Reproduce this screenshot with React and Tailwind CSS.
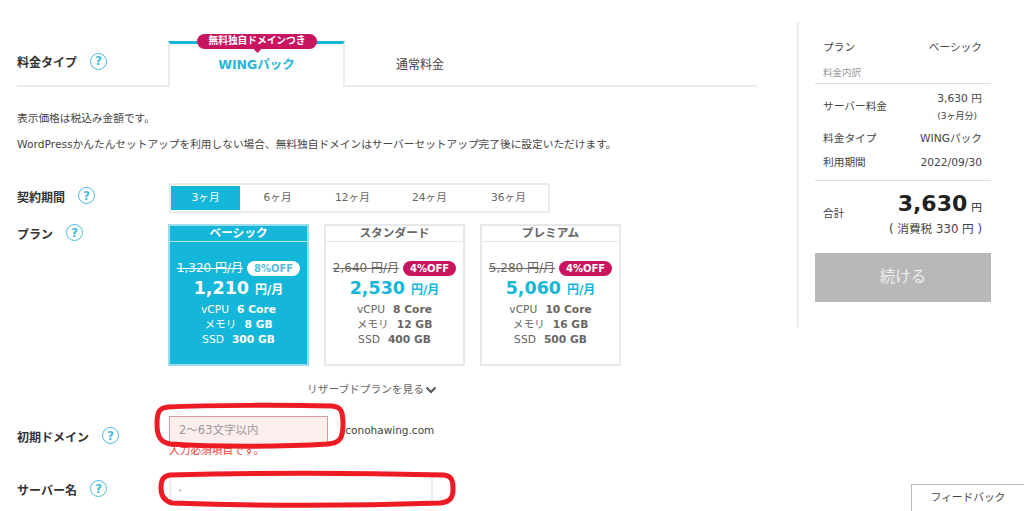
const font = { fontFamily: '"DejaVu Sans", "Noto Sans CJK JP", sans-serif' };

const Help = () => (
  <span className="mb-[4px] flex h-[17px] w-[17px] shrink-0 items-center justify-center rounded-full border-[1.5px] border-[#45bcdd] text-[12px] font-semibold leading-none text-[#45bcdd]">?</span>
);

const Label = ({ children }) => (
  <div className="flex items-center gap-[13px] text-[12px] font-bold text-[#333]">
    <span>{children}</span>
    <Help />
  </div>
);

const terms = [
  { label: "3ヶ月", width: "w-[69px]", active: true },
  { label: "6ヶ月", width: "w-[75px]" },
  { label: "12ヶ月", width: "w-[75px]" },
  { label: "24ヶ月", width: "w-[79px]" },
  { label: "36ヶ月", width: "w-[79px]" },
];

const plans = [
  { name: "ベーシック", old: "1,320 円/月", off: "8%OFF", price: "1,210", cpu: "6 Core", mem: "8 GB", ssd: "300 GB", active: true },
  { name: "スタンダード", old: "2,640 円/月", off: "4%OFF", price: "2,530", cpu: "8 Core", mem: "12 GB", ssd: "400 GB" },
  { name: "プレミアム", old: "5,280 円/月", off: "4%OFF", price: "5,060", cpu: "10 Core", mem: "16 GB", ssd: "500 GB" },
];

const PlanCard = ({ plan }) => (
  <div className={`flex h-[142px] w-[141px] flex-col border-2 text-center ${plan.active ? "border-[#9adcec] bg-[#14b7d9] text-white" : "border-[#e8e8e8] bg-white text-[#666]"}`}>
    <div className={`mx-[-1px] h-[16px] border-b text-[11.7px] font-bold leading-[15px] ${plan.active ? "border-[#b5e6f2]" : "border-[#e8e8e8]"}`}>{plan.name}</div>
    <div className="mt-[19px] flex items-center justify-center gap-[4px]">
      <span className="whitespace-nowrap text-[12px] leading-[15px] line-through">{plan.old}</span>
      <span className={`whitespace-nowrap rounded-full px-[7px] text-[10px] font-bold leading-[15px] ${plan.active ? "bg-white text-[#55bdd8]" : "bg-[#c9145f] text-white"}`}>{plan.off}</span>
    </div>
    <div className="flex h-[24px] items-baseline justify-center gap-[6px]">
      <span className={`text-[17.5px] font-bold leading-[24px] ${plan.active ? "text-white" : "text-[#14b7d9]"}`}>{plan.price}</span>
      <span className={`text-[12px] font-bold ${plan.active ? "text-white" : "text-[#14b7d9]"}`}>円/月</span>
    </div>
    <div className="mt-[2px] text-[10.7px] leading-[15px]">
      <div>vCPU<b className="ml-[8px]">{plan.cpu}</b></div>
      <div>メモリ<b className="ml-[8px]">{plan.mem}</b></div>
      <div>SSD<b className="ml-[8px]">{plan.ssd}</b></div>
    </div>
  </div>
);

const SummaryRow = ({ left, right, className = "" }) => (
  <div className={`flex justify-between pl-2 pr-[9px] text-[10.7px] leading-[16px] text-[#444] ${className}`}>
    <span>{left}</span>
    <span>{right}</span>
  </div>
);

export default function App() {
  return (
    <div style={font} className="relative flex h-[511px] w-[1024px] overflow-hidden bg-white">
      {/* main form */}
      <div className="w-[797px] shrink-0 pl-[17px]">
        <div className="mt-[41px] flex h-[46px] w-[740px] border-b-2 border-[#ececec]">
          <div className="flex w-[151px] items-center">
            <Label>料金タイプ</Label>
          </div>
          <div className="relative -mb-[2px] flex h-[46px] w-[177px] items-center justify-center border-x-2 border-t-[3px] border-x-[#ececec] border-t-[#14b7d9] bg-white pb-[1px] text-[12.5px] font-bold text-[#29b6d8]">
            WINGパック
            <div className="absolute -top-[10px] left-[27px] flex h-[15px] w-[120px] items-center justify-center rounded-full bg-[#c9145f] text-[9.7px] font-bold text-white">無料独自ドメインつき</div>
            <div className="absolute left-[85px] top-[3px] h-[5px] w-[5px] rotate-45 bg-[#c9145f]"></div>
          </div>
          <div className="flex w-[150px] items-center justify-center pt-[3px] text-[12px] text-[#444]">通常料金</div>
        </div>

        <p className="mt-[24px] text-[10.7px] leading-[16px] text-[#444]">表示価格は税込み金額です。</p>
        <p className="mt-[10px] text-[10.7px] leading-[16px] text-[#444]">WordPressかんたんセットアップを利用しない場合、無料独自ドメインはサーバーセットアップ完了後に設定いただけます。</p>

        <div className="mt-[30px] flex h-[30px]">
          <div className="flex w-[152px] items-center pb-[1px]">
            <Label>契約期間</Label>
          </div>
          <div className="flex h-[30px] w-[381px] border-2 border-[#ececec] py-px">
            {terms.map((t) => (
              <div key={t.label} className={`flex shrink-0 items-center justify-center text-[10.7px] ${t.width} ${t.active ? "bg-[#14b7d9] text-white" : "text-[#666]"}`}>{t.label}</div>
            ))}
          </div>
        </div>

        <div className="mt-[11px] flex">
          <div className="w-[151px]">
            <Label>プラン</Label>
          </div>
          <div className="flex gap-[15px]">
            {plans.map((p) => <PlanCard key={p.name} plan={p} />)}
          </div>
        </div>

        <div className="mt-[16px] flex h-4 items-center pl-[290px] text-[10.7px] text-[#666]">
          リザーブドプランを見る
          <svg width="12" height="8" viewBox="0 0 12 8" className="ml-[1px]" fill="none" stroke="#555" strokeWidth="2"><path d="M1.5 1.5 6 6l4.5-4.5" /></svg>
        </div>

        <div className="mt-[18px] flex">
          <div className="w-[152px] pt-[11px]">
            <Label>初期ドメイン</Label>
          </div>
          <div>
            <div className="flex items-center">
              <div className="flex h-[29px] w-[159px] items-center border border-[#d89a9a] bg-[#fdeeee] pl-[9px] text-[11.5px] text-[#999]">2〜63文字以内</div>
              <span className="ml-[14px] text-[10.5px] text-[#444]">.conohawing.com</span>
            </div>
            <div className="-mt-[1px] text-[10.7px] leading-[14px] text-[#ee3b3b]">入力必須項目です。</div>
          </div>
        </div>

        <div className="mt-[18px] flex">
          <div className="w-[152px] pt-[4px]">
            <Label>サーバー名</Label>
          </div>
          <div className="h-[29px] w-[264px] overflow-hidden border-x-2 border-[#ececec] pl-[8px] text-[8px] leading-[36px] text-[#555]">'</div>
        </div>
      </div>

      {/* summary */}
      <div className="mt-[22px] h-[305px] w-[195px] border-l-2 border-[#ececec] pl-[16px]">
        <div className="w-[176px]">
          <SummaryRow left="プラン" right="ベーシック" className="mt-[18px]" />
          <div className="mt-[10px] border-b border-[#ddd] px-2 pb-[3px] text-[9.5px] leading-[14px] text-[#999]">料金内訳</div>
          <div className="mt-[7px] flex items-center justify-between pl-2 pr-[9px] text-[10.7px] text-[#444]">
            <span>サーバー料金</span>
            <div className="text-right leading-[16px]">
              <div>3,630 円</div>
              <div className="pr-[5px] pt-[1px] text-[9px]">(3ヶ月分)</div>
            </div>
          </div>
          <SummaryRow left="料金タイプ" right="WINGパック" className="mt-[7px]" />
          <SummaryRow left="利用期間" right="2022/09/30" className="mt-[8px]" />
          <div className="mt-[9px] flex items-center justify-between border-t border-[#ddd] pl-2 pr-[9px] pt-[10px] text-[#444]">
            <span className="mt-[1px] text-[10.7px]">合計</span>
            <div className="text-right">
              <div className="text-[22px] font-bold leading-[26px] text-[#222]">3,630<span className="ml-[4px] text-[10.7px] font-normal">円</span></div>
              <div className="whitespace-nowrap text-[11.7px] leading-[16px]">( 消費税 330 円 )</div>
            </div>
          </div>
          <div className="mt-[16px] flex h-[49px] items-center justify-center bg-[#b8b8b8] text-[15.5px] text-[#eee]">続ける</div>
        </div>
      </div>

      <div className="absolute bottom-0 right-0 flex h-[27px] w-[113px] items-center justify-center border border-b-0 border-r-0 border-[#bbb] bg-white text-[10.7px] text-[#444]">フィードバック</div>

      {/* red hand-drawn marks */}
      <svg className="pointer-events-none absolute left-0 top-0" width="1024" height="511" fill="none" stroke="#ed1c24" strokeWidth="5">
        <path d="M168 407 C210 405 290 405 332 406 C341 407 343 411 343 424 C343 438 340 443 328 444 C280 447 215 447 170 444 C160 442 157 436 157 424 C157 412 159 408 168 407 Z" />
        <path d="M170 475 C250 473 360 473 444 475 C452 476 453 481 453 489 C453 498 450 502 440 503 C350 506 260 506 172 503 C164 501 161 496 161 488 C161 480 163 476 170 475 Z" />
      </svg>
    </div>
  );
}
